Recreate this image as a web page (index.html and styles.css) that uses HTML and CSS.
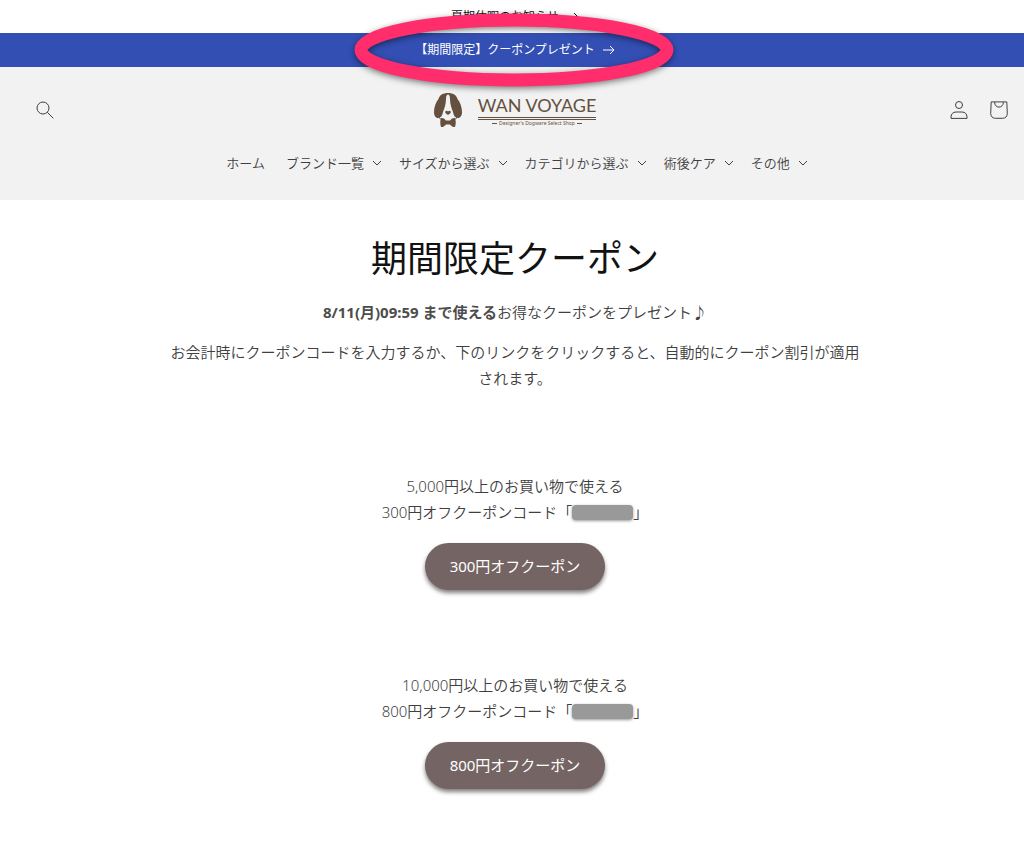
FILE: index.html
```html
<!DOCTYPE html>
<html lang="ja">
<head>
    <meta charset="UTF-8">
    <meta name="viewport" content="width=device-width, initial-scale=1">
    <title>期間限定クーポン | WAN VOYAGE</title>
    <link rel="stylesheet" href="styles.css">
</head>
<body>
    <div class="announcement">
        <a href="#">夏期休暇のお知らせ
            <svg class="arrow" viewBox="0 0 12 10"><path d="M0 5h11M7 1l4 4-4 4"/></svg>
        </a>
    </div>
    <div class="announcement blue">
        <a href="#">【期間限定】クーポンプレゼント
            <svg class="arrow" viewBox="0 0 12 10"><path d="M0 5h11M7 1l4 4-4 4"/></svg>
        </a>
        <svg class="marker" viewBox="0 0 340 100">
            <ellipse cx="170" cy="50" rx="153" ry="30"/>
        </svg>
    </div>
    <header>
        <div class="header-row">
            <button type="button" class="search" aria-label="検索">
                <svg viewBox="0 0 18 18"><circle cx="7" cy="7" r="6"/><path d="M11.3 11.3l6 6"/></svg>
            </button>
            <a href="#" class="logo">
                <svg class="dog" viewBox="0 0 28 34">
                    <path d="M14 0C9 0 5.500 2 4.500 6C2 9 0 14 0 19c0 3.500 1.500 6 4 6c3 0 4.500-3 5-6C10.500 15 12 11 12 6C12 3 12.800 1.500 14 1.500S16 3 16 6c0 5 1.500 9 3 13c.5 3 2 6 5 6c2.500 0 4-2.500 4-6c0-5-2-10-4.500-13C22.500 2 19 0 14 0z"/>
                    <path d="M5 24c1 2 2 3 4 3M23 24c-1 2-2 3-4 3" class="line"/>
                    <path d="M14 22c-1.500-1-3-2-2.800-3.300c.3-1.300 2-1.300 2.800-.3c.8-1 2.500-1 2.800.3c.2 1.300-1.300 2.300-2.800 3.300z"/>
                    <path d="M7 25c2-.5 4 1 5 2.500h4c1-1.500 3-3 5-2.500c1 3 1 6 0 9c-2 .3-4-1-5-2.500h-4c-1 1.500-3 2.800-5 2.500c-1-3-1-6 0-9z"/>
                </svg>
                <span class="logo-text">
                    <span class="name">WAN VOYAGE</span>
                    <span class="tagline">Designer's Dogware Select Shop</span>
                </span>
            </a>
            <div class="icons">
                <a href="#" aria-label="ログイン">
                    <svg viewBox="0 0 18 18"><circle cx="9" cy="4" r="3.500"/><path d="M1 17.400v-1.400c0-3 2-5 5-5h6c3 0 5 2 5 5v1.400z"/></svg>
                </a>
                <a href="#" aria-label="カート">
                    <svg viewBox="0 0 18 18"><path d="M1.200.9h15.600l.5 11.500c0 3-1.800 4.900-4.800 4.900h-7c-3 0-4.800-1.900-4.800-4.900z"/><path d="M4.700 1v.8a4.300 4.300 0 0 0 8.600 0V1"/></svg>
                </a>
            </div>
        </div>
        <nav>
            <a href="#" class="home">ホーム</a>
            <button type="button">ブランド一覧<svg viewBox="0 0 10 6"><path d="M1 1l4 4 4-4"/></svg></button>
            <button type="button">サイズから選ぶ<svg viewBox="0 0 10 6"><path d="M1 1l4 4 4-4"/></svg></button>
            <button type="button">カテゴリから選ぶ<svg viewBox="0 0 10 6"><path d="M1 1l4 4 4-4"/></svg></button>
            <button type="button">術後ケア<svg viewBox="0 0 10 6"><path d="M1 1l4 4 4-4"/></svg></button>
            <button type="button">その他<svg viewBox="0 0 10 6"><path d="M1 1l4 4 4-4"/></svg></button>
        </nav>
    </header>
    <main>
        <h1>期間限定クーポン</h1>
        <p><strong>8/11(月)09:59 まで使える</strong>お得なクーポンをプレゼント♪</p>
        <p>お会計時にクーポンコードを入力するか、下のリンクをクリックすると、自動的にクーポン割引が適用されます。</p>
        <section class="coupon">
            <p>5,000円以上のお買い物で使える<br>300円オフクーポンコード「<span class="code"></span>」</p>
            <a href="#" class="btn">300円オフクーポン</a>
        </section>
        <section class="coupon">
            <p>10,000円以上のお買い物で使える<br>800円オフクーポンコード「<span class="code"></span>」</p>
            <a href="#" class="btn">800円オフクーポン</a>
        </section>
    </main>
</body>
</html>
```
FILE: styles.css
```css
*{
    box-sizing: border-box;
    margin: 0;
    padding: 0;
}
body{
    background: white;
    color: #404040;
    font-family: "Noto Sans", "Noto Sans CJK JP", sans-serif;
    font-size: 15px;
    font-weight: 350;
    line-height: 26px;
}
a{
    color: inherit;
    text-decoration: none;
}
button{
    border: 0;
    background: none;
    color: inherit;
    font: inherit;
    cursor: pointer;
}
svg{
    flex-shrink: 0;
    fill: none;
    stroke: currentColor;
}
.announcement{
    position: relative;
    display: flex;
    justify-content: center;
    align-items: center;
    height: 33px;
    padding-left: 6px;
    color: #121212;
    font-size: 12px;
    font-weight: 400;
}
.announcement.blue{
    height: 34px;
    background: #334fb4;
    color: white;
}
.announcement a{
    display: flex;
    align-items: center;
    gap: 8px;
}
.arrow{
    width: 12px;
    height: 10px;
}
/* hand drawn ring around the coupon link */
.marker{
    position: absolute;
    top: -33px;
    left: calc(50% - 168px);
    z-index: 2;
    width: 340px;
    height: 100px;
    stroke: #ff2d6b;
    stroke-width: 13;
    filter: drop-shadow(0 2px 3px rgba(0,0,0,0.5));
    pointer-events: none;
}
header{
    height: 133px;
    padding-top: 20px;
    background: #f2f2f2;
}
.header-row{
    display: grid;
    grid-template-columns: 1fr auto 1fr;
    align-items: center;
    height: 46px;
    padding: 0 16px 0 22px;
}
.header-row button svg,
.icons svg{
    display: block;
    width: 18px;
    height: 18px;
}
.search{
    justify-self: start;
    padding: 14px;
}
.icons{
    display: flex;
    justify-content: flex-end;
    gap: 22px;
}
.logo{
    display: flex;
    align-items: center;
    gap: 16px;
    color: #65503f;
}
.dog{
    width: 28px;
    height: 34px;
    fill: currentColor;
    stroke: none;
}
.dog .line{
    fill: none;
    stroke: currentColor;
}
.logo-text{
    display: flex;
    flex-direction: column;
    align-items: center;
}
.name{
    border-bottom: 3px double currentColor;
    font-family: Lato, "Liberation Sans", sans-serif;
    font-size: 18px;
    font-weight: 400;
    line-height: 24px;
}
.tagline{
    display: flex;
    align-items: center;
    gap: 2px;
    font-size: 5px;
    font-weight: 400;
    line-height: 7px;
}
.tagline::before,
.tagline::after{
    content: "";
    width: 5px;
    height: 1px;
    background: currentColor;
}
nav{
    display: flex;
    justify-content: center;
    gap: 17px;
    margin-top: 17px;
    padding-left: 10px;
    font-size: 13px;
}
.home{
    margin-right: 4px;
}
nav button{
    display: flex;
    align-items: center;
    gap: 8px;
}
nav svg{
    width: 10px;
    height: 6px;
}
main{
    max-width: 702px;
    margin: 0 auto;
    padding: 32px 0 52px 6px;
    text-align: center;
}
h1{
    margin-bottom: 13px;
    color: #121212;
    font-size: 36px;
    font-weight: 400;
    line-height: 54px;
}
p{
    margin-bottom: 14px;
}
strong{
    color: #4d4d4d;
    font-weight: 700;
}
.coupon{
    margin-top: 82px;
}
.coupon p{
    margin-bottom: 18px;
}
.code{
    display: inline-block;
    width: 61px;
    height: 15px;
    border-radius: 4px;
    background: #999;
    box-shadow: 0 1px 3px rgba(0,0,0,0.4);
    vertical-align: -2px;
}
.btn{
    display: inline-block;
    padding: 10px 25px 11px;
    border-radius: 24px;
    background: #746463;
    box-shadow: 0 3px 4px rgba(0,0,0,0.5);
    color: white;
    font-weight: 400;
}
```
